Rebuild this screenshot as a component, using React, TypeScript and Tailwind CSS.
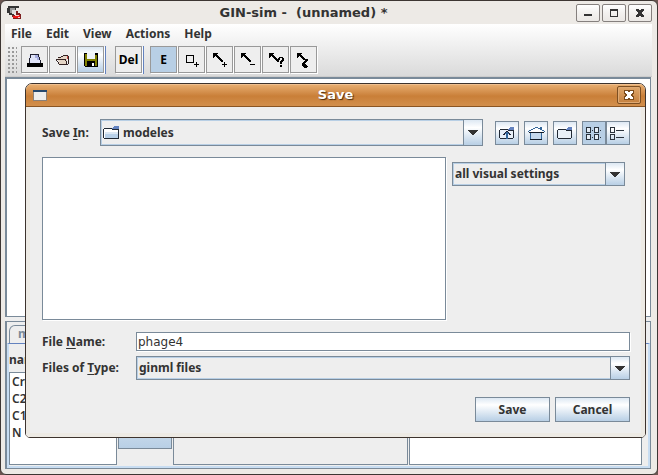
import React from "react";

const slateBox = "border border-[#7a8a99]";
const metal = "bg-linear-to-b from-[#dde8f3] via-white via-30% to-[#b8cfe5]";

function Arrow() {
  return (
    <svg width="10" height="5" viewBox="0 0 10 5" shapeRendering="crispEdges">
      <path d="M0 0h10v1H9v1H8v1H7v1H6v1H4V4H3V3H2V2H1V1H0z" fill="#333" />
    </svg>
  );
}

function FolderIcon() {
  return (
    <svg width="16" height="14" viewBox="0 0 16 14" shapeRendering="crispEdges">
      <path d="M1 3h14v9H1z" fill="#fff" />
      <path d="M2 6h13v2H2z" fill="#dce8f4" />
      <path d="M2 8h13v4H2z" fill="#b8d0e8" />
      <path d="M9 2h1V1h1V0h5v3H9z" fill="#6382bf" />
      <path d="M0 3h1v9H0zM1 2h8v1H1zM9 3h7v1H9zM15 4h1v9h-1zM1 12h15v1H1z" fill="#222a35" />
    </svg>
  );
}

type ComboProps = {
  id: string;
  label?: string;
  value: string;
  icon?: React.ReactNode;
  className: string;
  text: string;
};

function Combo({ id, label, value, icon, className, text }: ComboProps) {
  return (
    <div className={`relative flex ${slateBox} ${className}`}>
      <select
        id={id}
        aria-label={label}
        className={`w-full appearance-none border border-[#b8cfe5] bg-[#eee] pr-5 font-bold outline-none ${text}`}
      >
        <option>{value}</option>
      </select>
      {icon && <span className="pointer-events-none absolute top-1/2 left-[2px] -translate-y-1/2">{icon}</span>}
      <span
        className={`pointer-events-none absolute inset-y-0 right-0 flex w-[19px] items-center justify-center border-l border-[#7a8a99] ${metal}`}
      >
        <Arrow />
      </span>
    </div>
  );
}

function Tool({ label, active, children }: { label: string; active?: string; children: React.ReactNode }) {
  return (
    <button
      aria-label={label}
      className={`flex size-[27px] items-center justify-center border border-[#999] text-xs font-bold text-black shadow-[1px_1px_0_#fff] ${active ?? "bg-[#eee]"}`}
    >
      {children}
    </button>
  );
}

function ToolSvg({ children }: { children: React.ReactNode }) {
  return (
    <svg width="25" height="25" viewBox="0 0 25 25" shapeRendering="crispEdges">
      {children}
    </svg>
  );
}

function EdgeArrow() {
  return (
    <path
      d="M6 6h5v1h-1v1h1v1h1v1h1v1h1v1h1v1h1v2h-2v-1h-1v-1h-1v-1h-1v-1h-1v-1H9v-1H8v1H7v1H6z"
      fill="#000"
    />
  );
}

function WindowButton({ label, children }: { label: string; children: React.ReactNode }) {
  return (
    <button
      aria-label={label}
      className="flex h-[18px] w-6 items-center justify-center rounded-[2px] border border-[#85807e] bg-linear-to-b from-white via-[#f3f1ef] to-[#ebe8e5]"
    >
      <svg width="10" height="10" viewBox="0 0 10 10" shapeRendering="crispEdges">
        {children}
      </svg>
    </button>
  );
}

const crossPath =
  "M1 1h3v1h2V1h3v2H8v1H7v2h1v1h1v2H6V8H4v1H1V7h1V6h1V4H2V3H1z";

function MiniButton({ label, active, children }: { label: string; active?: boolean; children: React.ReactNode }) {
  return (
    <button
      aria-label={label}
      className={`flex size-6 items-center justify-center ${slateBox} ${active ? "bg-[#b8cfe5]" : metal}`}
    >
      <svg width="18" height="18" viewBox="0 0 18 18" shapeRendering="crispEdges">
        {children}
      </svg>
    </button>
  );
}

function SmallFolder() {
  return (
    <>
      <path d="M2 6h13v8H2z" fill="#e8f0f8" />
      <path d="M10 5h1V4h1V3h4v3h-6z" fill="#6382bf" />
      <path d="M1 6h1v8H1zM2 5h8v1H2zM10 6h5v1h-5zM15 6h1v8h-1zM2 14h13v1H2z" fill="#222a35" />
    </>
  );
}

function SaveDialog() {
  return (
    <section
      aria-label="Save"
      className="absolute top-[83px] right-[12px] left-[25px] overflow-hidden rounded-t-[7px] rounded-b-[5px] border border-[#3d332d] bg-[#eee]"
    >
      <header className="relative flex h-[23px] items-center justify-between border-b border-[#8a5523] bg-linear-to-b from-[#e9b072] via-[#c97f38] via-55% to-[#d28f4c] pr-1 pl-[7px] shadow-[inset_0_1px_0_#f0c090]">
        <svg width="14" height="11" viewBox="0 0 14 11" shapeRendering="crispEdges">
          <path d="M0 0h14v11H0z" fill="#8a8078" />
          <path d="M1 2h12v8H1z" fill="#ececec" />
          <path d="M0 0h14v2H0z" fill="#24486e" />
        </svg>
        <h2 className="absolute inset-x-0 text-center font-['DejaVu_Sans',sans-serif] text-[13px] leading-5 font-bold text-white [text-shadow:1px_1px_1px_#4a2a0c]">
          Save
        </h2>
        <button
          aria-label="Close"
          className="relative flex h-[18px] w-6 items-center justify-center rounded-[2px] border border-[#7d4f22] bg-linear-to-b from-[#dfa76b] to-[#c4803e] shadow-[inset_0_0_0_1px_#dfa973]"
        >
          <svg width="12" height="12" viewBox="-1 -1 12 12" shapeRendering="crispEdges">
            <path d={crossPath} fill="#fff" stroke="#7a4a1c" strokeWidth="2" paintOrder="stroke" />
          </svg>
        </button>
      </header>

      <form
        className="flex flex-col border-4 border-t-0 border-[#edeae4] pt-3 pr-[11px] pb-[11px] pl-3"
        onSubmit={(e) => e.preventDefault()}
      >
        <div className="flex items-center">
          <label htmlFor="save-in" className="w-[58px]">
            Save <u className="underline-offset-2">I</u>n:
          </label>
          <Combo id="save-in" value="modeles" icon={<FolderIcon />} className="h-[27px] flex-1" text="pl-[21px]" />
          <div className="ml-3 flex gap-[5px]">
            <MiniButton label="Up One Level">
              <SmallFolder />
              <path d="M8 8h2v7H8zM7 9h4v1H7z" fill="#33669a" />
              <path d="M8 7h2v1H8zM7 8h1v1H7zM10 8h1v1h-1zM6 9h1v1H6zM11 9h1v1h-1zM5 10h2v1H5zM11 10h2v1h-2z" fill="#223" />
            </MiniButton>
            <MiniButton label="Home">
              <path d="M4 8h10v7H4z" fill="#c4d8ec" />
              <path d="M8 4h3v1h2v1h1v1h2v1H3V7h2V6h1V5h2z" fill="#fff" />
              <path
                d="M8 3h3v1H8zM6 4h2v1H6zM11 4h2v1h-2zM4 5h2v1H4zM13 3h2v3h-2zM2 6h2v1H2zM15 6h2v1h-2zM1 7h1v1H1zM17 7h1v1h-1zM3 9h1v6H3zM14 9h1v6h-1z"
                fill="#33669a"
              />
              <path d="M2 8h15v1H2zM3 15h12v1H3z" fill="#111c28" />
            </MiniButton>
            <MiniButton label="Create New Folder">
              <SmallFolder />
            </MiniButton>
            <div className="flex">
              <MiniButton label="List" active>
                <path d="M2 4h3v4H2zM10 4h3v4h-3zM2 11h3v4H2zM10 11h3v4h-3z" fill="#e4edf6" />
                <path
                  fillRule="evenodd"
                  d="M1 3h5v6H1zM2 4v4h3V4zM9 3h5v6H9zM10 4v4h3V4zM1 10h5v6H1zM2 11v4h3v-4zM9 10h5v6H9zM10 11v4h3v-4zM7 6h1v1H7zM15 6h1v1h-1zM7 13h1v1H7zM15 13h1v1h-1z"
                  fill="#2a333d"
                />
              </MiniButton>
              <MiniButton label="Details">
                <path
                  fillRule="evenodd"
                  d="M1 3h5v6H1zM2 4v4h3V4zM1 10h5v6H1zM2 11v4h3v-4zM7 6h8v1H7zM7 13h8v1H7z"
                  fill="#2a333d"
                />
              </MiniButton>
            </div>
          </div>
        </div>

        <div className="mt-[11px] flex gap-[6px]">
          <div className={`h-[163px] flex-1 bg-white shadow-[1px_1px_0_#fff] ${slateBox}`} />
          <Combo
            id="settings"
            label="Visual settings"
            value="all visual settings"
            className="mt-[5px] mr-[5px] h-6 w-[173px]"
            text="pl-px"
          />
        </div>

        <div className="mt-3 grid grid-cols-[94px_1fr] items-center gap-y-[5px]">
          <label htmlFor="file-name">
            File <u className="underline-offset-2">N</u>ame:
          </label>
          <input
            id="file-name"
            defaultValue="phage4"
            className={`h-[19px] bg-white px-px font-['DejaVu_Sans',sans-serif] text-xs font-normal shadow-[1px_1px_0_#fff] outline-none ${slateBox}`}
          />
          <label htmlFor="file-type">
            Files of <u className="underline-offset-2">T</u>ype:
          </label>
          <Combo id="file-type" value="ginml files" className="h-6" text="pl-px" />
        </div>

        <div className="mt-[17px] flex justify-end gap-[5px]">
          <button type="submit" className={`h-[25px] w-[75px] font-bold ${slateBox} ${metal}`}>
            Save
          </button>
          <button type="button" className={`h-[25px] w-[75px] font-bold ${slateBox} ${metal}`}>
            Cancel
          </button>
        </div>
      </form>
    </section>
  );
}

export default function App() {
  return (
    <div className="relative h-screen bg-[#6b5550] font-['Noto_Sans',sans-serif] text-xs font-bold text-[#333]">
      <div className="flex h-full flex-col rounded-[6px] border border-[#3d3633] bg-[#edeae6] pr-[5px] pb-[5px] pl-1">
        <header className="relative flex h-[23px] shrink-0 items-center justify-between">
          <svg width="16" height="16" viewBox="0 0 16 16" className="ml-[2px]" shapeRendering="crispEdges">
            <path d="M1 1h11v2H9v2H4v3h3v2H2V8H0V3h1z" fill="#333" />
            <path d="M3 3h5v2H5v3H3z" fill="#999" />
            <path d="M5 5h5v3H7v1H5z" fill="#ddd" />
            <path d="M9 6h2v2h2v1h1v5H6v-2H5v-2h4z" fill="#7d2020" />
            <path d="M6 11h3v-1h4v3H6z" fill="#f01818" />
            <path d="M8 10h4v1H8zM11 12h2v1h-2z" fill="#ffc9c9" />
          </svg>
          <h1 className="absolute right-[50px] left-0 text-center font-['DejaVu_Sans',sans-serif] text-[13px] leading-5 font-bold whitespace-pre">
            GIN-sim -  (unnamed) *
          </h1>
          <div className="relative flex gap-[2px]">
            <WindowButton label="Minimize">
              <path d="M1 6h8v2H1z" fill="#333" />
            </WindowButton>
            <WindowButton label="Maximize">
              <path fillRule="evenodd" d="M1 1h8v8H1zM2 3v5h6V3z" fill="#333" />
            </WindowButton>
            <WindowButton label="Close">
              <path d={crossPath} fill="#333" />
            </WindowButton>
          </div>
        </header>

        <div className="shrink-0 border-b border-[#ccc] bg-linear-to-b from-white to-[#dadada]">
          <nav className="flex h-[20px] items-center gap-[14px] pl-[6px]">
            <button>File</button>
            <button>Edit</button>
            <button>View</button>
            <button>Actions</button>
            <button>Help</button>
          </nav>
          <div className="flex h-8 items-start gap-px pt-[2px] pl-[2px]">
            <div className="mr-[3px] h-[28px] w-[10px] bg-[radial-gradient(#999_1px,transparent_1px)] bg-[size:4px_4px]" />
            <Tool label="New">
              <ToolSvg>
                <path d="M8 7h8v2h1v2h1v2h1v3H7V9h1z" fill="#dfe3f8" />
                <path d="M8 7h9v1H8zM8 8h1v3H8zM7 11h1v5H7zM16 8h1v2h-1zM17 10h1v3h-1zM18 13h1v3h-1z" fill="#223" />
                <path d="M13 8h3v2h1v3h-2v-2h-2z" fill="#a7aee0" />
                <path d="M5 16h16v4H5z" fill="#000" />
              </ToolSvg>
            </Tool>
            <Tool label="Open">
              <ToolSvg>
                <path d="M8 10h4V9h5v8H9z" fill="#e5d5c5" />
                <path d="M11 9h2V8h5v1h-5v1h-2zM18 9h1v8h-1zM8 10h3v1H8zM6 12h10v1H6zM6 13h1v1H6zM7 14h1v1H7zM8 15h1v2H8zM9 17h9v1H9zM15 13h1v1h-1zM16 14h1v3h-1z" fill="#322" />
                <path d="M17 9h1v3h-1z" fill="#b44" />
              </ToolSvg>
            </Tool>
            <Tool label="Save" active={metal}>
              <ToolSvg>
                <path d="M6 6h14v14H7v-1H6z" fill="#000" />
                <path d="M7 7h2v12H7zM17 8h2v11h-2zM9 12h8v2H9z" fill="#808000" />
                <path d="M9 6h8v6H9z" fill="#eef3f9" />
                <path d="M14 16h2v3h-2z" fill="#fff" />
              </ToolSvg>
            </Tool>
            <div className="mr-[8px] h-[28px] w-px bg-[#6382bf]" />
            <Tool label="Delete">Del</Tool>
            <div className="mr-[5px] h-[28px] w-px bg-[#6382bf]" />
            <Tool label="Edit" active="bg-[#b8cfe5]">E</Tool>
            <Tool label="Add node">
              <ToolSvg>
                <path fillRule="evenodd" d="M7 8h8v8H7zM8 9v6h6V9zM17 15h1v2h2v1h-2v2h-1v-2h-2v-1h2z" />
              </ToolSvg>
            </Tool>
            <Tool label="Add positive edge">
              <ToolSvg>
                <EdgeArrow />
                <path d="M17 15h1v2h2v1h-2v2h-1v-2h-2v-1h2z" />
              </ToolSvg>
            </Tool>
            <Tool label="Add negative edge">
              <ToolSvg>
                <EdgeArrow />
                <path d="M15 17h5v1h-5z" />
              </ToolSvg>
            </Tool>
            <Tool label="Add unknown edge">
              <ToolSvg>
                <EdgeArrow />
                <path d="M16 10h4v1h1v3h-1v1h-1v2h-2v-3h1v-1h1v-2h-2v2h-2v-2h1zM17 18h2v2h-2z" />
              </ToolSvg>
            </Tool>
            <Tool label="Bend edge">
              <ToolSvg>
                <path d="M6 6h5v1h-1v1h1v1h1v1h1v1h1v1h3v2h-1v1h-1v1h-1v1h1v1h1v1h1v1h-1v1h-3v-1h-1v-1h-1v-3h1v-1h1v-1h1v-1h-2v-1h-1v-1h-1v-1H9v-1H8v1H7v1H6z" />
              </ToolSvg>
            </Tool>
          </div>
        </div>

        <main className="flex min-h-0 flex-1 flex-col pr-px">
          <div className="min-h-0 flex-1 border-2 border-r border-b border-[#7a8a99] bg-white" />
          <div className="h-1 shrink-0 bg-[#eee]" />
          <div className="flex h-[148px] shrink-0 flex-col border border-l-2 border-[#7a8a99] bg-[#eee] pt-[3px]">
            <div className="flex pl-[2px]">
              <div className="h-[18px] w-20 rounded-tl-[6px] border border-b-0 border-[#7a8a99] pl-2 text-[#7a8a99]">
                m
              </div>
            </div>
            <div className="flex min-h-0 flex-1 flex-col border-2 border-t border-[#c8ddf2] border-t-[#6382bf] bg-[#eee] pr-[6px] pb-px">
              <div className="flex min-h-0 flex-1 gap-px">
                <div className="flex w-[108px] flex-col">
                  <div className="pt-[8px] pb-[4px] leading-4">name</div>
                  <ul className={`flex-1 bg-white pl-[2px] leading-[17px] font-semibold ${slateBox}`}>
                    <li>Cro</li>
                    <li>C2</li>
                    <li>C1</li>
                    <li>N</li>
                  </ul>
                </div>
                <div className={`mb-4 w-[54px] ${slateBox} ${metal}`} />
                <div className={`w-[235px] ${slateBox}`} />
                <div className={`flex-1 bg-white ${slateBox}`} />
              </div>
            </div>
          </div>
        </main>
      </div>
      <SaveDialog />
    </div>
  );
}
